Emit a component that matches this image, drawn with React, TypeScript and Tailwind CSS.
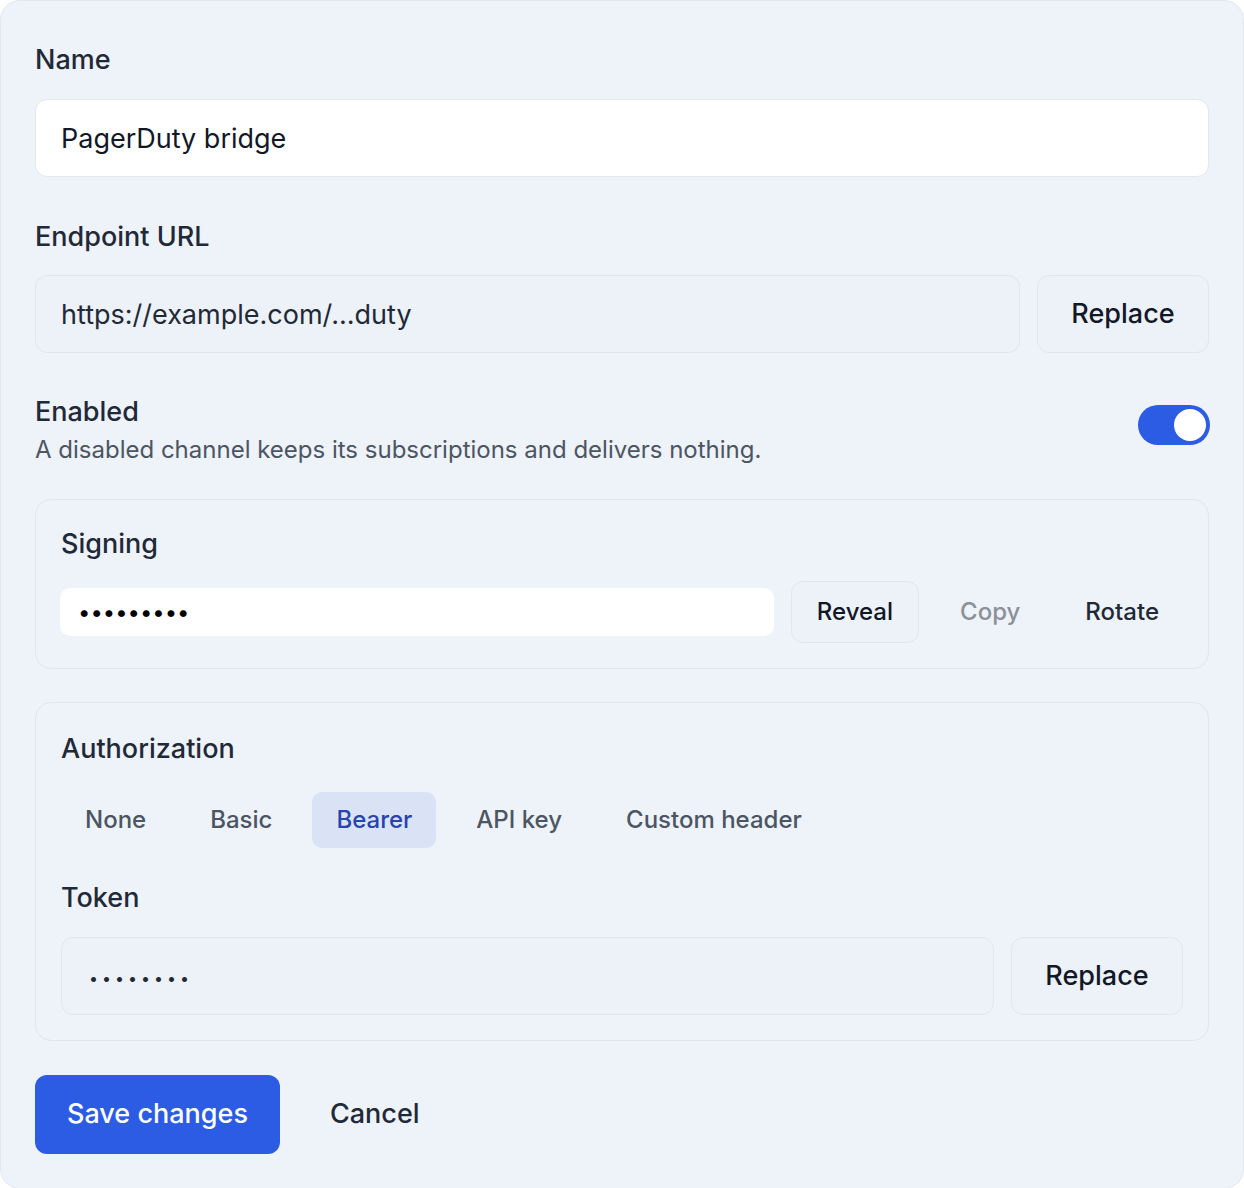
import { useState } from "react"

const tabs = ["None", "Basic", "Bearer", "API key", "Custom header"]

export default function App() {
  const [enabled, setEnabled] = useState(true)
  const [auth, setAuth] = useState("Bearer")

  return (
    <div className="w-[1244px] bg-white font-['Inter',sans-serif] text-[#1f2937]">
      <div className="flex flex-col rounded-[20px] border border-[#e2e6ee] bg-[#eef2f9] px-[34px] pt-[41px] pb-[34px]">
        {/* Name */}
        <label className="text-[27px] font-medium leading-[36px]">Name</label>
        <div className="mt-[21px] flex h-[78px] items-center rounded-[12px] border border-[#e3e7ee] bg-white px-[25px] pt-[3px] text-[27px] text-[#111827]">
          PagerDuty bridge
        </div>

        {/* Endpoint */}
        <label className="mt-[42px] text-[27px] font-medium leading-[36px]">Endpoint URL</label>
        <div className="mt-[20px] flex gap-[17px]">
          <div className="flex h-[78px] flex-1 items-center rounded-[12px] border border-[#e1e5ec] bg-[#edf1f8] px-[25px] pt-[3px] text-[27px] text-[#1f2937]">
            https://example.com/…duty
          </div>
          <button className="h-[78px] w-[172px] rounded-[12px] border border-[#e1e5ec] bg-[#edf1f8] text-[27px] font-medium text-[#111827]">
            Replace
          </button>
        </div>

        {/* Enabled */}
        <div className="mt-[41px] flex items-center justify-between">
          <div className="flex flex-col">
            <span className="text-[27px] font-medium leading-[36px]">Enabled</span>
            <span className="mt-[4px] text-[24px] leading-[32px] text-[#4b5563]">
              A disabled channel keeps its subscriptions and delivers nothing.
            </span>
          </div>
          <button
            onClick={() => setEnabled(!enabled)}
            className={
              enabled
                ? "mb-[10px] mr-[-1px] flex h-[40px] w-[72px] items-center justify-end rounded-full bg-[#2c5be4] p-[4px]"
                : "mb-[10px] mr-[-1px] flex h-[40px] w-[72px] items-center justify-start rounded-full bg-[#cbd2dd] p-[4px]"
            }
          >
            <span className="h-[32px] w-[32px] rounded-full bg-white" />
          </button>
        </div>

        {/* Signing */}
        <div className="mt-[33px] rounded-[16px] border border-[#e1e5ec] px-[25px] pt-[26px] pb-[25px]">
          <div className="text-[27px] font-medium leading-[36px]">Signing</div>
          <div className="mt-[19px] flex items-center gap-[17px]">
            <div className="ml-[-1px] flex h-[48px] flex-1 items-center rounded-[10px] bg-white pl-[18px] text-[22px] text-black">
              •••••••••
            </div>
            <button className="h-[62px] rounded-[12px] border border-[#e1e5ec] bg-[#edf1f8] px-[25px] text-[24px] font-medium text-[#111827]">
              Reveal
            </button>
            <button className="h-[62px] px-[24px] text-[24px] font-medium text-[#8b9099]">Copy</button>
            <button className="h-[62px] px-[24px] text-[24px] font-medium text-[#1f2937]">Rotate</button>
          </div>
        </div>

        {/* Authorization */}
        <div className="mt-[33px] rounded-[16px] border border-[#e1e5ec] px-[25px] pt-[28px] pb-[25px]">
          <div className="text-[27px] font-medium leading-[36px]">Authorization</div>
          <div className="mt-[25px] flex gap-[16px]">
            {tabs.map((t) => (
              <button
                key={t}
                onClick={() => setAuth(t)}
                className={
                  auth === t
                    ? "h-[56px] rounded-[10px] bg-[#dae3f5] px-[24px] text-[24px] font-medium text-[#2844ad]"
                    : "h-[56px] rounded-[10px] px-[24px] text-[24px] font-medium text-[#4b5563]"
                }
              >
                {t}
              </button>
            ))}
          </div>
          <div className="mt-[32px] text-[27px] font-medium leading-[36px]">Token</div>
          <div className="mt-[21px] flex gap-[17px]">
            <div className="flex h-[78px] flex-1 items-center rounded-[12px] border border-[#e1e5ec] bg-[#edf1f8] px-[27px] pt-[3px] text-[16px] tracking-[4px] text-[#1f2937]">
              ••••••••
            </div>
            <button className="h-[78px] w-[172px] rounded-[12px] border border-[#e1e5ec] bg-[#edf1f8] text-[27px] font-medium text-[#111827]">
              Replace
            </button>
          </div>
        </div>

        {/* Actions */}
        <div className="mt-[34px] flex items-center gap-[16px]">
          <button className="h-[79px] rounded-[12px] bg-[#2c5be4] px-[32px] text-[27px] font-medium text-white">
            Save changes
          </button>
          <button className="h-[79px] px-[34px] text-[27px] font-medium text-[#1f2937]">Cancel</button>
        </div>
      </div>
    </div>
  )
}
